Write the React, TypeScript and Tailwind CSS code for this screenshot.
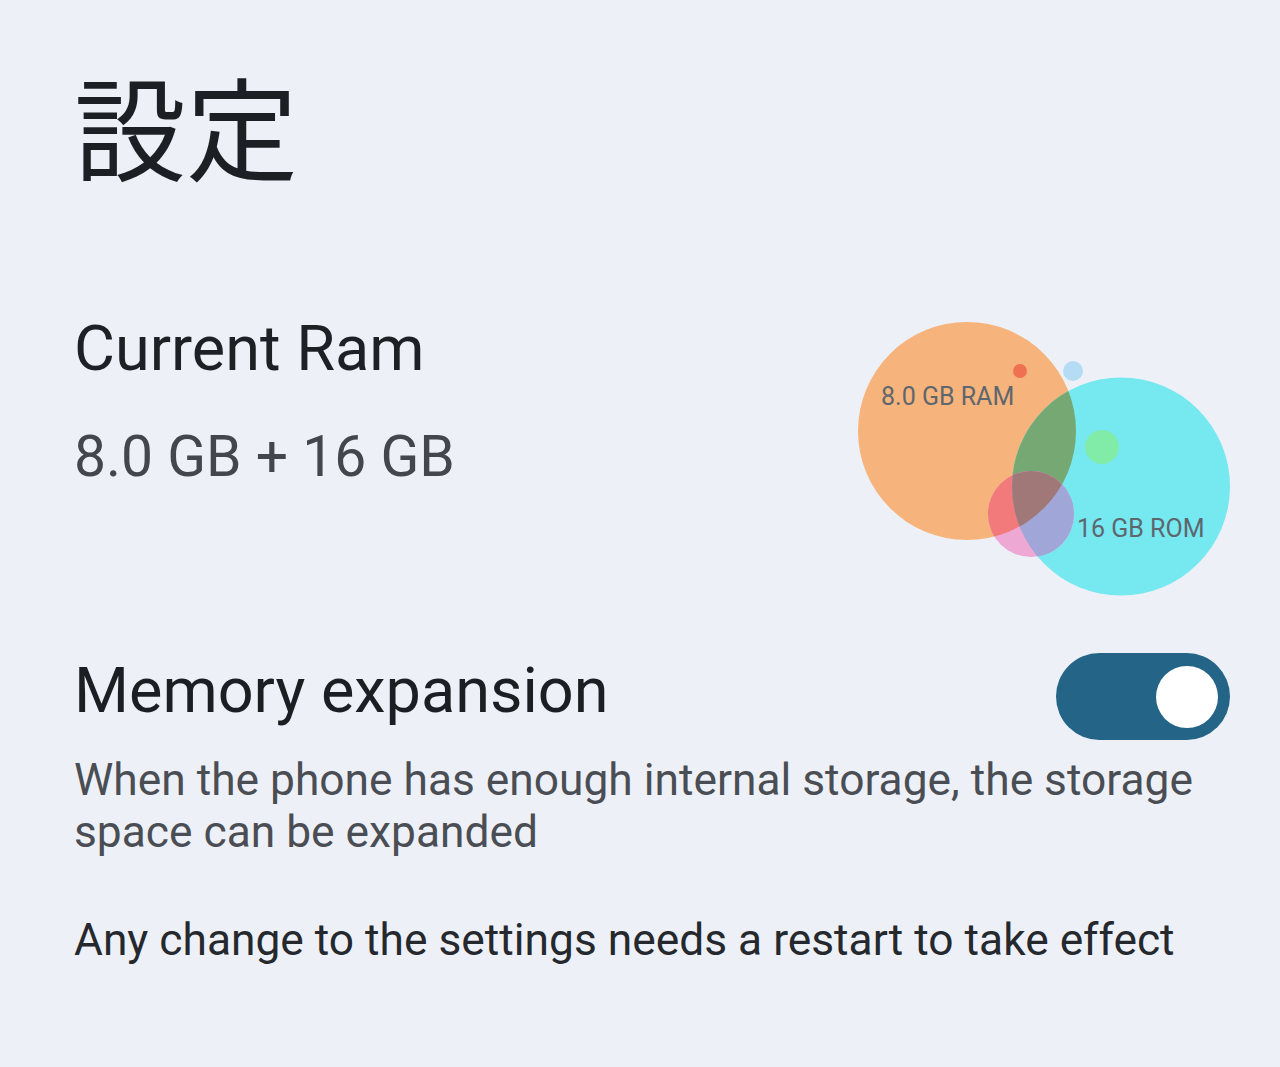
import React from "react";

function Chart() {
  const O = { cx: 967, cy: 431, r: 109 };
  const C = { cx: 1121, cy: 486.5, r: 109 };
  const P = { cx: 1031, cy: 514, r: 43 };
  return (
    <svg width={380} height={285} viewBox="850 315 380 285" className="block shrink-0">
      <defs>
        <clipPath id="clipO">
          <circle cx={O.cx} cy={O.cy} r={O.r} />
        </clipPath>
        <clipPath id="clipC">
          <circle cx={C.cx} cy={C.cy} r={C.r} />
        </clipPath>
      </defs>
      <circle cx={O.cx} cy={O.cy} r={O.r} fill="#f6b47c" />
      <circle cx={C.cx} cy={C.cy} r={C.r} fill="#76e8f0" />
      <g clipPath="url(#clipO)">
        <circle cx={C.cx} cy={C.cy} r={C.r} fill="#76a874" />
      </g>
      <circle cx={1102} cy={447} r={17} fill="#80eca8" />
      <circle cx={1073} cy={371} r={10} fill="#b4dcf5" />
      <circle cx={1020} cy={371} r={7} fill="#f07052" />
      <circle cx={P.cx} cy={P.cy} r={P.r} fill="#eea8d4" />
      <g clipPath="url(#clipO)">
        <circle cx={P.cx} cy={P.cy} r={P.r} fill="#f27a7a" />
      </g>
      <g clipPath="url(#clipC)">
        <circle cx={P.cx} cy={P.cy} r={P.r} fill="#a0a6d8" />
      </g>
      <g clipPath="url(#clipC)">
        <g clipPath="url(#clipO)">
          <circle cx={P.cx} cy={P.cy} r={P.r} fill="#a07878" />
        </g>
      </g>
      <text x={881} y={405} fontSize={25} fill="#5e666e" style={{ fontFamily: "Roboto, sans-serif" }}>
        8.0 GB RAM
      </text>
      <text x={1077} y={537} fontSize={25} fill="#5e666e" style={{ fontFamily: "Roboto, sans-serif" }}>
        16 GB ROM
      </text>
    </svg>
  );
}

export default function App() {
  return (
    <div className="w-[1280px] h-[1067px] bg-[#edf1f7] overflow-hidden pl-[74px] pr-[50px] pt-[68px] font-['Roboto',sans-serif]">
      <h1 className="text-[112px] leading-[112px] h-[112px] text-[#1c2024] font-normal font-['Noto_Sans_CJK_JP','Noto_Sans_CJK_SC',sans-serif]">
        設定
      </h1>
      <div className="mt-[135px] flex justify-between items-start">
        <div className="mt-[2px]">
          <div className="text-[63px] leading-[63px] text-[#1d2125]">Current Ram</div>
          <div className="mt-[48px] text-[57px] leading-[57px] text-[#43474d]">8.0 GB + 16 GB</div>
        </div>
        <Chart />
      </div>
      <div className="mt-[53px] flex justify-between items-start">
        <div className="mt-[6px] text-[63px] leading-[63px] text-[#1b1f23]">Memory expansion</div>
        <div className="w-[174px] h-[87px] rounded-full bg-[#236487] flex items-center justify-end pr-[12px]">
          <div className="w-[62px] h-[62px] rounded-full bg-white" />
        </div>
      </div>
      <p className="mt-[14px] text-[44.3px] leading-[52px] text-[#4a4e54]">
        When the phone has enough internal storage, the storage space can be expanded
      </p>
      <p className="mt-[56px] text-[44.3px] leading-[52px] text-[#25292e]">
        Any change to the settings needs a restart to take effect
      </p>
    </div>
  );
}
